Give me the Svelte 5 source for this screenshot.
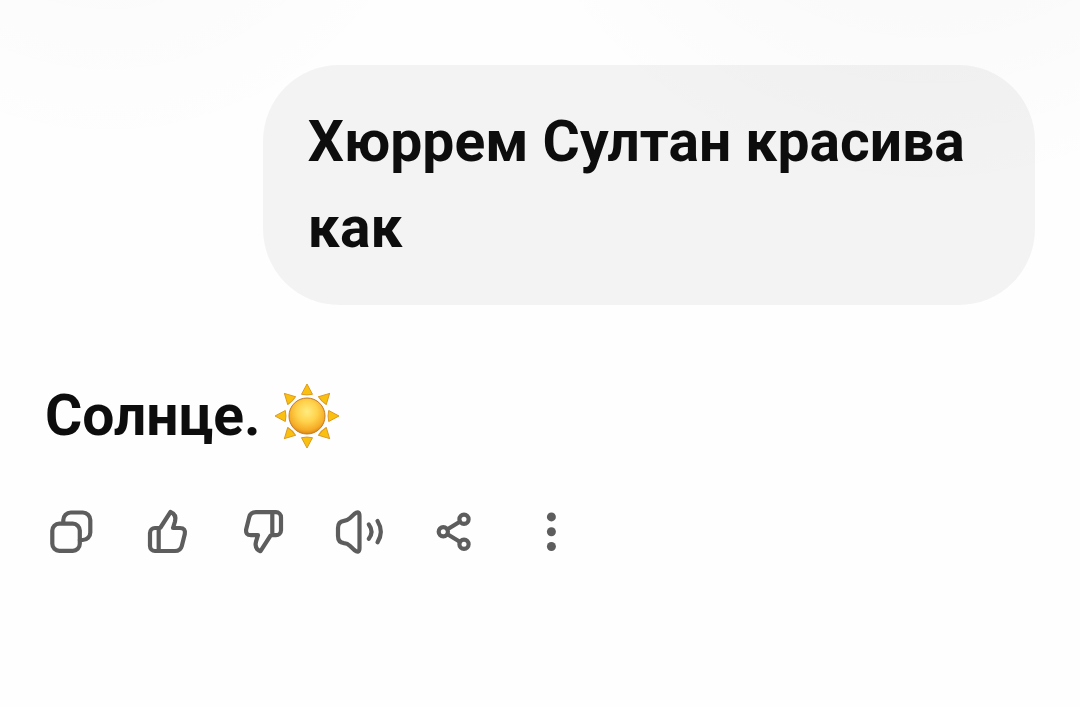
<script>
  const rays = [0, 45, 90, 135, 180, 225, 270, 315];
</script>

<main class="chat">
  <div class="question">
    <p>Хюррем Султан красива как</p>
  </div>

  <div class="answer">
    <p>
      Солнце.
      <svg class="sun" viewBox="0 0 66 66" role="img" aria-label="☀️">
        <defs>
          <radialGradient id="disc" cx="0.5" cy="0.38" r="0.64">
            <stop offset="0" stop-color="#ffec80" />
            <stop offset="0.45" stop-color="#ffd24c" />
            <stop offset="0.8" stop-color="#f6ac26" />
            <stop offset="1" stop-color="#d58210" />
          </radialGradient>
        </defs>
        {#each rays as angle}
          <path
            d="M32 1 L37.500 11.300 Q32 12.600 26.500 11.300 Z"
            transform="rotate({angle} 32 33)"
            fill="#fac010"
            stroke="#dc9a20"
            stroke-width="1"
            stroke-linejoin="round"
          />
        {/each}
        <circle cx="32" cy="33" r="18" fill="url(#disc)" stroke="#c07c28" stroke-width="1" />
      </svg>
    </p>
  </div>

  <div class="actions">
    <button type="button" aria-label="Копировать">
      <svg viewBox="0 0 96 96">
        <rect x="28.300" y="39.600" width="27.500" height="27.200" rx="7" />
        <path d="M39.300 39V36a7.500 7.500 0 0 1 7.500-7.500h12a7.500 7.500 0 0 1 7.500 7.500v12.500a7.500 7.500 0 0 1-7.500 7.500h-3" />
      </svg>
    </button>
    <button type="button" aria-label="Нравится">
      <svg viewBox="0 0 96 96">
        <path d="M38.7 44H35a5 5 0 0 0-5 5v13a5 5 0 0 0 5 5h20q5.500 0 6.800-5l3-12q1-6-4.800-6h-7l2-6.500q1.800-7-4.500-9.500L40.500 43.500M38.700 44v23" />
      </svg>
    </button>
    <button type="button" aria-label="Не нравится">
      <svg viewBox="0 0 96 96">
        <path transform="rotate(180 47.500 47.600)" d="M38.7 44H35a5 5 0 0 0-5 5v13a5 5 0 0 0 5 5h20q5.500 0 6.800-5l3-12q1-6-4.800-6h-7l2-6.500q1.800-7-4.500-9.500L40.500 43.500M38.700 44v23" />
      </svg>
    </button>
    <button type="button" aria-label="Озвучить">
      <svg viewBox="0 0 96 96">
        <path d="M26 44q0-6.500 6-7.200 3.500-.3 5.800-2.500l4.500-4.300q5.200-4 5.200 2v32q0 6-5.200 2l-4.500-4.300q-2.300-2.200-5.800-2.500-6-.7-6-7.200z" />
        <path d="M56.800 40.500q5.400 7.200 0 14.300M65.500 37q6.600 10.700 0 21.300" />
      </svg>
    </button>
    <button type="button" aria-label="Поделиться">
      <svg viewBox="0 0 96 96">
        <circle cx="56" cy="35.300" r="4.600" />
        <circle cx="35.300" cy="47.800" r="4.600" />
        <circle cx="56" cy="60.200" r="4.600" />
        <path d="M39.500 45.300l12.300-7.500M39.500 50.300l12.300 7.500" />
      </svg>
    </button>
    <button type="button" aria-label="Ещё">
      <svg class="dots" viewBox="0 0 96 96">
        <circle cx="47.400" cy="32.900" r="4.500" />
        <circle cx="47.400" cy="47.700" r="4.500" />
        <circle cx="47.400" cy="62.500" r="4.500" />
      </svg>
    </button>
  </div>
</main>

<style>
  :global(body) {
    margin: 0;
    background: #fefefe;
  }

  .chat {
    box-sizing: border-box;
    min-height: 100vh;
    padding: 65px 45px 45px;
    display: flex;
    flex-direction: column;
    align-items: flex-start;
    font-family: Roboto, "Noto Sans", sans-serif;
    font-size: 57px;
    line-height: 86px;
    font-weight: 700;
    color: #0d0d0d;
    background:
      radial-gradient(circle 360px at 10% -200px, rgba(0, 0, 0, 0.022), transparent),
      radial-gradient(circle 460px at 86% -260px, rgba(0, 0, 0, 0.04), transparent),
      #fefefe;
  }

  p {
    margin: 0;
  }

  .question {
    box-sizing: border-box;
    align-self: flex-end;
    width: 78%;
    padding: 34px 45px;
    border-radius: 76px;
    background: rgba(0, 0, 0, 0.042);
  }

  .answer {
    margin-top: 68px;
  }

  .sun {
    width: 66px;
    height: 66px;
    vertical-align: -14px;
  }

  .actions {
    display: flex;
    margin: 25px 0 0 -21px;
  }

  button {
    width: 96px;
    height: 96px;
    padding: 0;
    border: 0;
    background: none;
    color: #5d5d5d;
    cursor: pointer;
  }

  button svg {
    display: block;
    width: 100%;
    height: 100%;
    fill: none;
    stroke: currentColor;
    stroke-width: 4.2;
    stroke-linecap: round;
    stroke-linejoin: round;
  }

  button .dots {
    fill: currentColor;
    stroke: none;
  }
</style>
